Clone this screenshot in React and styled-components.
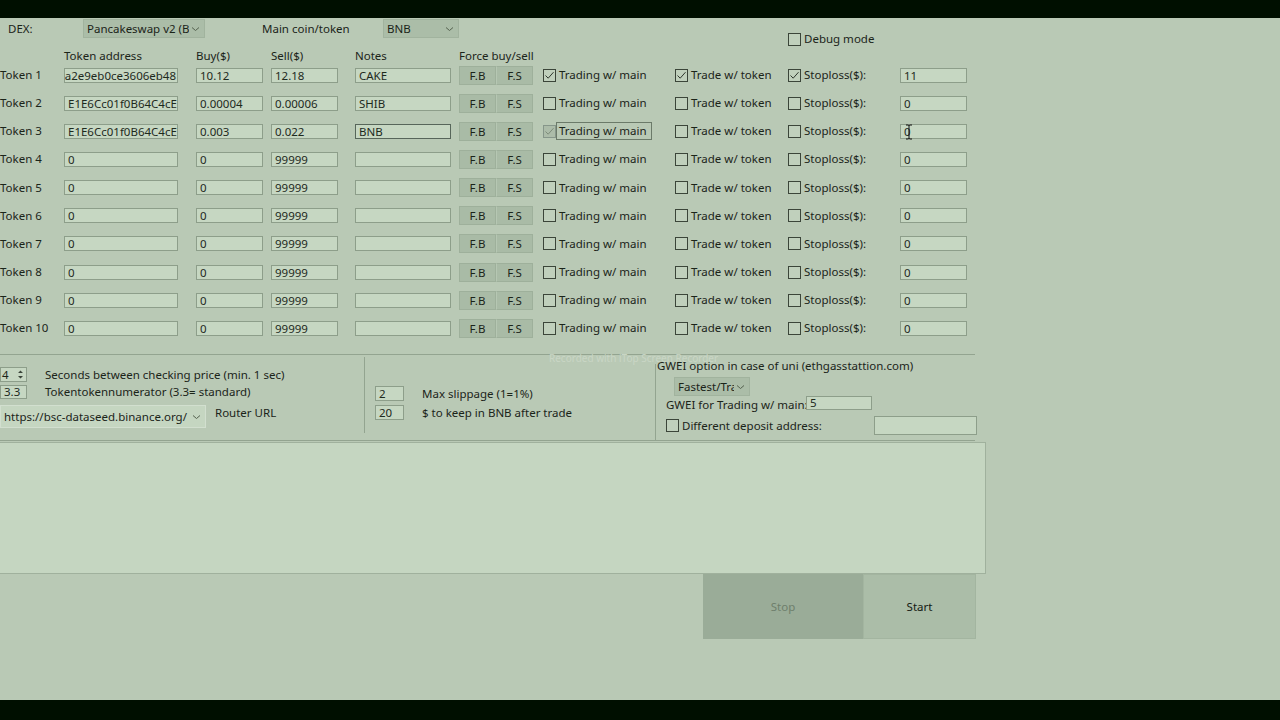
import React from "react";
import styled, { createGlobalStyle } from "styled-components";

const GlobalStyle = createGlobalStyle`
  html, body {
    margin: 0;
    padding: 0;
    background: #000f00;
  }
  body {
    font-family: "Noto Sans", "Open Sans", sans-serif;
    font-size: 11.5px;
    color: #1b2419;
  }
`;

const COLS = "64px 132px 75px 84px 104px 84px 132px 113px 112px 67px";

const Screen = styled.div`
  width: 1280px;
  height: 720px;
  display: flex;
  flex-direction: column;
  overflow: hidden;
  background: #000f00;
`;

const Bar = styled.div`
  flex: none;
  height: ${(p) => p.$h}px;
  background: #000f00;
`;

const Window = styled.div`
  flex: 1;
  position: relative;
  display: flex;
  flex-direction: column;
  overflow: hidden;
  background: #b9c9b5;
`;

const TopRow = styled.div`
  display: grid;
  grid-template-columns: 75px 179px 121px 405px auto;
  align-items: start;
  height: 30px;
  box-sizing: border-box;
  padding: 1px 0 0 8px;
`;

const Label = styled.span`
  white-space: nowrap;
  line-height: ${(p) => p.$lh || 14}px;
  margin-top: ${(p) => p.$mt || 0}px;
  margin-left: ${(p) => p.$ml || 0}px;
  width: ${(p) => (p.$w ? `${p.$w}px` : "auto")};
  flex: none;
`;

const Combo = styled.div`
  width: ${(p) => p.$w}px;
  height: ${(p) => p.$h || 19}px;
  box-sizing: border-box;
  display: flex;
  align-items: center;
  padding: 0 4px 0 3px;
  background: ${(p) => (p.$editable ? "#c5d6c1" : "#abbda8")};
  border: 1px solid ${(p) => (p.$editable ? "#d2dfcf" : "#a1b39e")};
  flex: none;
`;

const ComboText = styled.span`
  flex: 1;
  min-width: 0;
  overflow: hidden;
  white-space: nowrap;
  line-height: 14px;
`;

const Chevron = () => (
  <svg width="9" height="6" viewBox="0 0 9 6" style={{ flex: "none", marginLeft: 2 }}>
    <path d="M1 1.5 L4.5 4.5 L8 1.5" fill="none" stroke="#55624f" strokeWidth="1" />
  </svg>
);

const HeaderRow = styled.div`
  display: grid;
  grid-template-columns: ${COLS};
  height: 16px;
  line-height: 16px;
  white-space: nowrap;
`;

const TokenGrid = styled.div`
  display: grid;
  grid-template-columns: ${COLS};
  grid-auto-rows: 28.15px;
  align-items: center;
  margin-top: -3px;
`;

const TextBox = styled.div`
  position: relative;
  display: flex;
  align-items: center;
  justify-content: ${(p) => (p.$scrolled ? "flex-end" : "flex-start")};
  width: ${(p) => p.$w}px;
  height: ${(p) => p.$h || 15}px;
  box-sizing: border-box;
  padding: 0 ${(p) => (p.$scrolled ? 1 : 3)}px;
  line-height: ${(p) => (p.$h || 15) - 2}px;
  background: #c6d7c2;
  border: 1px solid ${(p) => (p.$focus ? "#57665a" : "#8d9e8a")};
  white-space: nowrap;
  overflow: ${(p) => (p.$cursor ? "visible" : "hidden")};
  color: #1e2a1d;
  flex: none;
`;

const ForceGroup = styled.div`
  display: flex;
`;

const ForceButton = styled.div`
  width: 37px;
  height: 19px;
  box-sizing: border-box;
  display: flex;
  align-items: center;
  justify-content: center;
  background: #a9bba6;
  border: 1px solid #9eb09b;
  & + & {
    border-left: 1px solid #b6c7b3;
  }
`;

const CheckRow = styled.div`
  display: flex;
  align-items: center;
  margin-top: ${(p) => p.$mt || 0}px;
  margin-left: ${(p) => p.$ml || 0}px;
`;

const Box = styled.span`
  width: 13px;
  height: 13px;
  box-sizing: border-box;
  flex: none;
  display: flex;
  align-items: center;
  justify-content: center;
  border: 1px solid ${(p) => (p.$pressed ? "#86968a" : "#3b4539")};
  background: ${(p) => (p.$pressed ? "#acbca9" : "#c0d0bc")};
`;

const CheckLabel = styled.span`
  white-space: nowrap;
  line-height: 14px;
  padding: 1px 2px;
  border: 1px solid ${(p) => (p.$focus ? "#6b7a69" : "transparent")};
  width: ${(p) => (p.$w ? `${p.$w}px` : "auto")};
`;

const Check = ({ checked, pressed, focus, label, labelWidth }) => (
  <CheckRow>
    <Box $pressed={pressed}>
      {checked && (
        <svg width="11" height="11" viewBox="0 0 11 11">
          <path
            d="M1.5 5.5 L4.2 8.2 L9.5 2.2"
            fill="none"
            stroke={pressed ? "#7d8c7a" : "#2e372d"}
            strokeWidth="1"
          />
        </svg>
      )}
    </Box>
    <CheckLabel $focus={focus} $w={labelWidth}>
      {label}
    </CheckLabel>
  </CheckRow>
);

const IBeam = styled.svg`
  position: absolute;
  left: 4px;
  top: -1px;
`;

const Settings = styled.div`
  display: grid;
  grid-template-columns: 364px 291px 320px;
  width: 975px;
  height: 87px;
  box-sizing: border-box;
  margin-top: 12px;
  border-top: 1px solid #93a490;
  border-bottom: 1px solid #93a490;
`;

const LeftGroup = styled.div`
  display: flex;
  flex-direction: column;
  padding-top: 12px;
`;

const Row = styled.div`
  display: flex;
  align-items: ${(p) => p.$align || "center"};
  margin-top: ${(p) => p.$mt || 0}px;
  margin-left: ${(p) => p.$ml || 0}px;
`;

const Spinner = styled.div`
  width: 27px;
  height: 15px;
  box-sizing: border-box;
  display: flex;
  align-items: center;
  justify-content: space-between;
  padding: 0 2px 0 1px;
  background: #c6d7c2;
  border: 1px solid #8d9e8a;
  line-height: 13px;
`;

const MiddleGroup = styled.div`
  margin: 2px 0 7px;
  padding: 29px 0 0 10px;
  border-left: 1px solid #93a490;
  display: flex;
  flex-direction: column;
`;

const RightGroup = styled.div`
  display: flex;
  flex-direction: column;
  padding: 4px 0 0 1px;
  border-left: 1px solid;
  border-image: linear-gradient(to bottom, transparent 10px, #93a490 10px) 1;
`;

const LogBox = styled.div`
  width: 987px;
  height: 132px;
  margin: 1px 0 0 -1px;
  box-sizing: border-box;
  background: #c5d6c1;
  border: 1px solid #a0b19d;
  flex: none;
`;

const ButtonRow = styled.div`
  display: flex;
  padding-left: 703px;
`;

const BigButton = styled.div`
  width: ${(p) => p.$w}px;
  height: 65px;
  box-sizing: border-box;
  display: flex;
  align-items: center;
  justify-content: center;
  background: ${(p) => (p.$disabled ? "#9aac98" : "#abbda8")};
  border: 1px solid ${(p) => (p.$disabled ? "#9aac98" : "#a3b5a0")};
  color: ${(p) => (p.$disabled ? "#6e7f6c" : "#141a13")};
`;

const Watermark = styled.div`
  position: absolute;
  left: 549px;
  top: 334px;
  font-size: 10px;
  line-height: 12px;
  color: #c9d6c5;
  white-space: nowrap;
  pointer-events: none;
`;

const tokens = [
  { addr: "a2e9eb0ce3606eb48", scrolled: true, buy: "10.12", sell: "12.18", notes: "CAKE", main: true, token: true, stop: true, stopVal: "11" },
  { addr: "E1E6Cc01f0B64C4cE52d", buy: "0.00004", sell: "0.00006", notes: "SHIB", stopVal: "0" },
  { addr: "E1E6Cc01f0B64C4cE52d", buy: "0.003", sell: "0.022", notes: "BNB", main: true, focus: true, stopVal: "0" },
];
for (let i = 4; i <= 10; i++) {
  tokens.push({ addr: "0", buy: "0", sell: "99999", notes: "", stopVal: "0" });
}

export default function App() {
  return (
    <Screen>
      <GlobalStyle />
      <Bar $h={18} />
      <Window>
        <TopRow>
          <Label $lh={19}>DEX:</Label>
          <Combo $w={122}>
            <ComboText>Pancakeswap v2 (BSC)</ComboText>
            <Chevron />
          </Combo>
          <Label $lh={19}>Main coin/token</Label>
          <Combo $w={76}>
            <ComboText>BNB</ComboText>
            <Chevron />
          </Combo>
          <CheckRow $mt={11}>
            <Check label="Debug mode" />
          </CheckRow>
        </TopRow>

        <HeaderRow>
          <span />
          <span>Token address</span>
          <span>Buy($)</span>
          <span>Sell($)</span>
          <span>Notes</span>
          <span>Force buy/sell</span>
        </HeaderRow>

        <TokenGrid>
          {tokens.map((t, i) => (
            <React.Fragment key={i}>
              <Label>Token {i + 1}</Label>
              <TextBox $w={114} $scrolled={t.scrolled}>
                {t.addr}
              </TextBox>
              <TextBox $w={67}>{t.buy}</TextBox>
              <TextBox $w={67}>{t.sell}</TextBox>
              <TextBox $w={96} $focus={t.focus}>
                {t.notes}
              </TextBox>
              <ForceGroup>
                <ForceButton>F.B</ForceButton>
                <ForceButton>F.S</ForceButton>
              </ForceGroup>
              <Check
                checked={t.main}
                pressed={t.focus}
                focus={t.focus}
                label="Trading w/ main"
                labelWidth={t.focus ? 90 : undefined}
              />
              <Check checked={t.token} label="Trade w/ token" />
              <Check checked={t.stop} label="Stoploss($):" />
              <TextBox $w={67} $cursor={t.focus}>
                {t.stopVal}
                {t.focus && (
                  <IBeam width="8" height="16" viewBox="0 0 8 16">
                    <path d="M1 1 H3 Q4 1 4 2 V14 Q4 15 3 15 H1 M7 1 H5 Q4 1 4 2 M4 14 Q4 15 5 15 H7" fill="none" stroke="#111" strokeWidth="1" />
                  </IBeam>
                )}
              </TextBox>
            </React.Fragment>
          ))}
        </TokenGrid>

        <Settings>
          <LeftGroup>
            <Row>
              <Spinner>
                <span>4</span>
                <svg width="7" height="11" viewBox="0 0 7 11">
                  <path d="M1 4 L3.5 1.5 L6 4 Z M1 7 L3.5 9.5 L6 7 Z" fill="#3a4439" />
                </svg>
              </Spinner>
              <Label $ml={18}>Seconds between checking price (min. 1 sec)</Label>
            </Row>
            <Row $mt={3}>
              <TextBox $w={27} $h={14}>
                3.3
              </TextBox>
              <Label $ml={18}>Tokentokennumerator (3.3= standard)</Label>
            </Row>
            <Row $mt={6} $align="flex-start">
              <Combo $w={206} $h={23} $editable>
                <ComboText>https://bsc-dataseed.binance.org/</ComboText>
                <Chevron />
              </Combo>
              <Label $ml={9} $lh={16}>
                Router URL
              </Label>
            </Row>
          </LeftGroup>

          <MiddleGroup>
            <Row>
              <TextBox $w={29}>2</TextBox>
              <Label $ml={18}>Max slippage (1=1%)</Label>
            </Row>
            <Row $mt={4}>
              <TextBox $w={29}>20</TextBox>
              <Label $ml={18}>$ to keep in BNB after trade</Label>
            </Row>
          </MiddleGroup>

          <RightGroup>
            <Label>GWEI option in case of uni (ethgasstattion.com)</Label>
            <Row $ml={17} $mt={4}>
              <Combo $w={76}>
                <ComboText>Fastest/Trading</ComboText>
                <Chevron />
              </Combo>
            </Row>
            <Row $ml={9} $align="flex-start">
              <Label $w={140} $mt={2}>
                GWEI for Trading w/ main:
              </Label>
              <TextBox $w={66} $h={14}>
                5
              </TextBox>
            </Row>
            <Row $ml={9} $mt={4}>
              <Check label="Different deposit address:" labelWidth={189} />
              <TextBox $w={103} $h={19} />
            </Row>
          </RightGroup>
        </Settings>

        <LogBox />

        <ButtonRow>
          <BigButton $w={160} $disabled>
            Stop
          </BigButton>
          <BigButton $w={113}>Start</BigButton>
        </ButtonRow>

        <Watermark>Recorded with iTop Screen Recorder</Watermark>
      </Window>
      <Bar $h={20} />
    </Screen>
  );
}
